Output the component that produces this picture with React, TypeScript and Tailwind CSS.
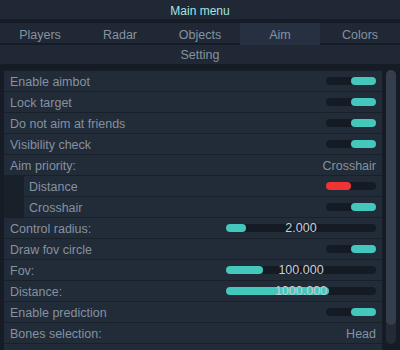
import React from 'react';

type Row =
  | { kind: 'toggle'; label: string; on: boolean; red?: boolean; indent?: boolean }
  | { kind: 'text'; label: string; value?: string }
  | { kind: 'slider'; label: string; fill: number; value: string }
  | { kind: 'empty' };

const rows: Row[] = [
  { kind: 'toggle', label: 'Enable aimbot', on: true },
  { kind: 'toggle', label: 'Lock target', on: true },
  { kind: 'toggle', label: 'Do not aim at friends', on: true },
  { kind: 'toggle', label: 'Visibility check', on: true },
  { kind: 'text', label: 'Aim priority:', value: 'Crosshair' },
  { kind: 'toggle', label: 'Distance', on: false, red: true, indent: true },
  { kind: 'toggle', label: 'Crosshair', on: true, indent: true },
  { kind: 'slider', label: 'Control radius:', fill: 20, value: '2.000' },
  { kind: 'toggle', label: 'Draw fov circle', on: true },
  { kind: 'slider', label: 'Fov:', fill: 37, value: '100.000' },
  { kind: 'slider', label: 'Distance:', fill: 103, value: '1000.000' },
  { kind: 'toggle', label: 'Enable prediction', on: true },
  { kind: 'text', label: 'Bones selection:', value: 'Head' },
  { kind: 'empty' },
];

const tabs = ['Players', 'Radar', 'Objects', 'Aim', 'Colors'];

function Toggle({ on, red }: { on: boolean; red?: boolean }) {
  return (
    <div className={`w-[50px] h-[8px] rounded-full bg-[#151b25] flex ${on ? 'justify-end' : 'justify-start'}`}>
      <div className={`w-[25px] h-[8px] rounded-full ${red ? 'bg-[#f03434]' : 'bg-[#44c8bb]'}`} />
    </div>
  );
}

function Slider({ fill, value }: { fill: number; value: string }) {
  return (
    <div className="relative w-[150px] h-[8px] rounded-full bg-[#151b25]">
      <div className="h-[8px] rounded-full bg-[#44c8bb]" style={{ width: fill }} />
      <div className="absolute inset-x-0 top-[-5px] text-center text-[12.5px] leading-[18px] text-[#c8cdd3]">{value}</div>
    </div>
  );
}

export default function App() {
  return (
    <div className="w-[400px] h-[350px] overflow-hidden bg-[#151c26] font-['Liberation_Sans',Arial,sans-serif] text-[12.5px] text-[#8592a0]">
      <div className="h-[19px] pt-[2px] bg-[#1f2834] text-center text-[12px] leading-[19px] text-[#a4e4e6]">Main menu</div>
      <div className="mt-[4px] h-[20px] grid grid-cols-5 bg-[#1f2834]">
        {tabs.map((t) => (
          <div key={t} className={`pt-[2px] text-center leading-[20px] ${t === 'Aim' ? 'bg-[#263040]' : ''}`}>
            {t}
          </div>
        ))}
      </div>
      <div className="mt-[2px] h-[19px] pt-[1px] bg-[#1f2834] text-center leading-[19px]">Setting</div>
      <div className="mt-[6px] flex pl-[4px] pr-[4px] gap-[4px]">
        <div className="w-[378px] pt-[1px] flex flex-col gap-[1px] bg-[#18202a]">
          {rows.map((r, i) => {
            if (r.kind === 'empty') return <div key={i} className="h-[20px] bg-[#222b38]" />;
            const indent = r.kind === 'toggle' && r.indent;
            return (
              <div key={i} className={`h-[20px] flex items-center justify-between pr-[6px] bg-[#222b38] ${indent ? 'ml-[20px] pl-[5px]' : 'pl-[6px]'}`}>
                <span className="pt-[2px]">{r.label}</span>
                {r.kind === 'toggle' && <Toggle on={r.on} red={r.red} />}
                {r.kind === 'text' && <span className="pt-[2px]">{r.value}</span>}
                {r.kind === 'slider' && <Slider fill={r.fill} value={r.value} />}
              </div>
            );
          })}
        </div>
        <div className="w-[10px] h-[274px] rounded-full bg-[#232b37] flex flex-col">
          <div className="h-[255px] rounded-full bg-[#343e4c]" />
        </div>
      </div>
    </div>
  );
}
